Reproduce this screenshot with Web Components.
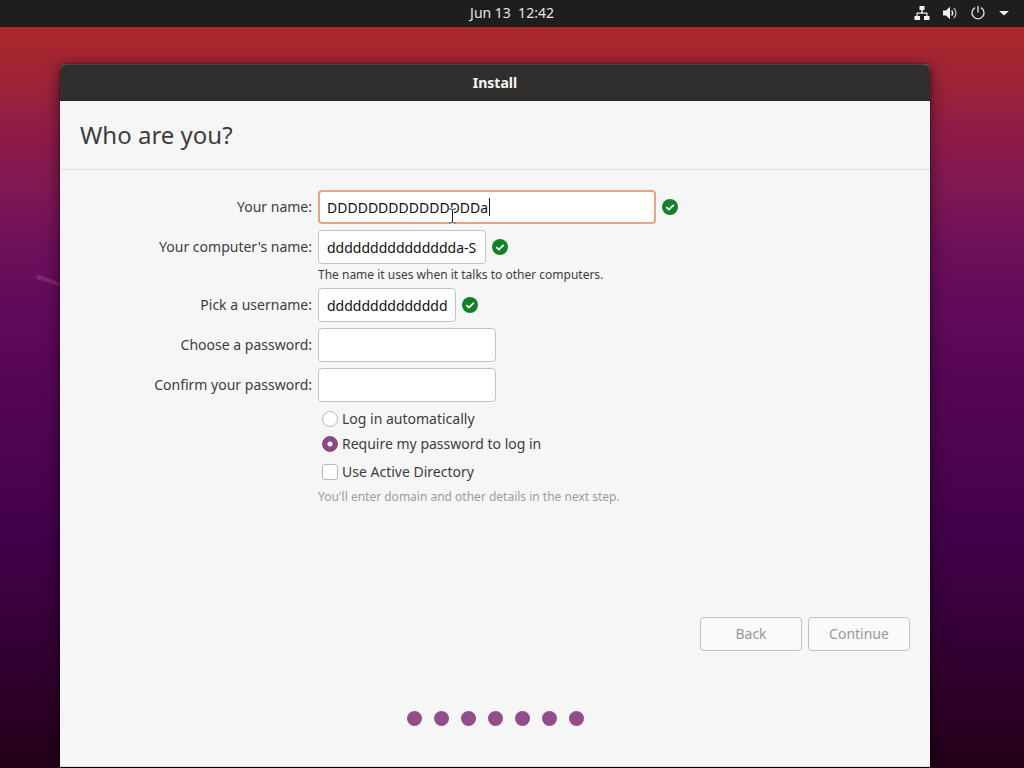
<!DOCTYPE html>
<html lang="en">
<head>
<meta charset="utf-8">
<title>Install</title>
<style>
    html, body {
        margin: 0;
    }
    body {
        font-family: "Noto Sans", "Open Sans", sans-serif;
        font-size: 14px;
        line-height: 20px;
        color: #3d3d3d;
    }
</style>
</head>
<body>
<desktop-screen>
    <top-bar slot="bar">Jun 13&nbsp; 12:42</top-bar>
    <app-window heading="Install">
        <installer-page heading="Who are you?">
            <form-field label="Your name:" value="DDDDDDDDDDDDDDDa" size="large" valid active></form-field>
            <form-field label="Your computer's name:" value="ddddddddddddddda-Standard-PC" size="medium" valid>The name it uses when it talks to other computers.</form-field>
            <form-field label="Pick a username:" value="ddddddddddddddda" size="small" valid></form-field>
            <form-field label="Choose a password:" type="password" size="secret"></form-field>
            <form-field label="Confirm your password:" type="password" size="secret"></form-field>
            <login-options>You'll enter domain and other details in the next step.</login-options>
            <nav-button slot="actions">Back</nav-button>
            <nav-button slot="actions">Continue</nav-button>
            <progress-dots slot="progress" count="7"></progress-dots>
        </installer-page>
    </app-window>
</desktop-screen>

<script>
class DesktopScreen extends HTMLElement {
    constructor() {
        super();
        this.attachShadow({ mode: 'open' });
        this.shadowRoot.innerHTML = `
            <style>
                :host {
                    display: flex;
                    flex-direction: column;
                    position: relative;
                    min-height: 100vh;
                    box-sizing: border-box;
                    overflow: hidden;
                    background: linear-gradient(#ad292a 3%, #9d2338 11%, #8d1b48 18%, #7f1853 25%, #6e105a 32%, #630b5b 39%, #570657 49%, #4e0551 58%, #400147 72%, #32002f 87%, #230018 100%);
                }
                .work-area {
                    flex: 1;
                    display: flex;
                    padding: 37px 94px 1px 60px;
                }
                /* faint facet line of the wallpaper */
                .streak {
                    position: absolute;
                    left: 36px;
                    top: 274px;
                }
                ::slotted(app-window) {
                    flex: 1;
                }
            </style>
            <slot name="bar"></slot>
            <svg class="streak" width="30" height="14" aria-hidden="true"><path d="M0 1 L4 1 L30 11 L30 14 L1 5Z" fill="#a44b84" opacity=".4"/></svg>
            <main class="work-area"><slot></slot></main>
        `;
    }
}

class TopBar extends HTMLElement {
    constructor() {
        super();
        this.attachShadow({ mode: 'open' });
        this.shadowRoot.innerHTML = `
            <style>
                :host {
                    display: grid;
                    grid-template-columns: 1fr auto 1fr;
                    align-items: center;
                    height: 26px;
                    padding: 0 14px;
                    border-bottom: 1px solid #1e1e1e;
                    background: #1e1e1e;
                    color: #e6e6e6;
                }
                .clock {
                    grid-column: 2;
                }
                .status {
                    display: flex;
                    justify-content: flex-end;
                    align-items: center;
                    gap: 12px;
                }
                svg {
                    display: block;
                }
            </style>
            <span class="clock"><slot></slot></span>
            <div class="status">
                <svg width="16" height="16" viewBox="0 0 16 16" fill="#f2f2f2" role="img" aria-label="Network">
                    <path d="M5.5 1h5v4H8.7v2.5h4.8V11H15.5v4h-5.5v-4h2.3V8.7H3.7V11H6v4H.5v-4h2V7.5h4.8V5H5.5z"/>
                </svg>
                <svg width="16" height="16" viewBox="0 0 16 16" role="img" aria-label="Volume">
                    <path d="M1 5.5h3L8 1.8v12.4L4 10.5H1z" fill="#f2f2f2"/>
                    <path d="M9.7 5.5q2 2.5 0 5" stroke="#f2f2f2" stroke-width="1.4" fill="none"/>
                    <path d="M11.8 2.8q4.4 5.2 0 10.4" stroke="#bdbdbd" stroke-width="1.3" fill="none"/>
                </svg>
                <svg width="16" height="16" viewBox="0 0 16 16" fill="none" stroke="#e6e6e6" stroke-width="1.3" role="img" aria-label="Power">
                    <path d="M5 2.6a6 6 0 1 0 6 0M8 1v6.5"/>
                </svg>
                <svg width="12" height="16" viewBox="0 0 12 16" fill="#f2f2f2" aria-hidden="true">
                    <path d="M1 6h10l-5 4.6z"/>
                </svg>
            </div>
        `;
    }
}

class AppWindow extends HTMLElement {
    constructor() {
        super();
        this.attachShadow({ mode: 'open' });
        this.shadowRoot.innerHTML = `
            <style>
                :host {
                    display: flex;
                    flex-direction: column;
                    position: relative;
                    border-radius: 6px 6px 0 0;
                    box-shadow: 0 3px 16px rgba(0, 0, 0, 0.55), 0 0 2px rgba(0, 0, 0, 0.6);
                    background: #f6f6f6;
                }
                header {
                    box-sizing: border-box;
                    height: 37px;
                    border-top: 1px solid #4a4541;
                    border-bottom: 1px solid #252321;
                    border-radius: 6px 6px 0 0;
                    background: #312f2e;
                    color: #f7f7f7;
                    font-size: 14px;
                    font-weight: 700;
                    line-height: 35px;
                    text-align: center;
                }
                ::slotted(*) {
                    flex: 1;
                }
            </style>
            <header>${this.getAttribute('heading')}</header>
            <slot></slot>
        `;
    }
}

class InstallerPage extends HTMLElement {
    constructor() {
        super();
        this.attachShadow({ mode: 'open' });
        this.shadowRoot.innerHTML = `
            <style>
                :host {
                    display: flex;
                    flex-direction: column;
                    border-bottom: 1px solid #dcdcdc;
                }
                h1 {
                    margin: 0;
                    padding: 0 20px;
                    border-bottom: 1px solid #dedede;
                    font-size: 24px;
                    font-weight: 400;
                    line-height: 68px;
                }
                .fields {
                    flex: 1;
                    display: flex;
                    flex-direction: column;
                    gap: 6px;
                    padding: 20px;
                }
                .actions {
                    display: flex;
                    justify-content: flex-end;
                    gap: 6px;
                    padding: 0 20px;
                }
                .progress {
                    padding: 60px 20px 40px;
                }
            </style>
            <h1>${this.getAttribute('heading')}</h1>
            <div class="fields"><slot></slot></div>
            <div class="actions"><slot name="actions"></slot></div>
            <div class="progress"><slot name="progress"></slot></div>
        `;
    }
}

class FormField extends HTMLElement {
    constructor() {
        super();
        this.attachShadow({ mode: 'open' });
        const type = this.getAttribute('type') || 'text';
        const hint = this.textContent.trim();

        this.shadowRoot.innerHTML = `
            <style>
                :host {
                    display: grid;
                    grid-template-columns: 232px 1fr;
                    column-gap: 6px;
                    align-items: center;
                }
                label {
                    text-align: right;
                    white-space: nowrap;
                }
                .control {
                    display: flex;
                    align-items: center;
                    gap: 6px;
                    position: relative;
                }
                input {
                    box-sizing: border-box;
                    height: 34px;
                    padding: 0 8px;
                    border: 1px solid #c4c1be;
                    border-radius: 4px;
                    background: #fff;
                    color: #111;
                    font: inherit;
                    outline: none;
                }
                .large { width: 338px; }
                .medium { width: 168px; }
                .small { width: 138px; }
                .secret { width: 178px; }
                .active {
                    border: 2px solid #e9a583;
                    padding: 0 7px;
                }
                .hint {
                    grid-column: 2;
                    margin-bottom: -4px;
                    font-size: 12px;
                    line-height: 22px;
                }
                .hint:empty {
                    display: none;
                }
                .caret {
                    position: absolute;
                    left: 171px;
                    top: 8px;
                    width: 1px;
                    height: 18px;
                    background: #111;
                }
                .pointer {
                    position: absolute;
                    left: 129px;
                    top: 17px;
                }
            </style>
            <label for="entry">${this.getAttribute('label')}</label>
            <div class="control">
                <input id="entry" type="${type}" class="${this.getAttribute('size')}" autocomplete="off" spellcheck="false">
            </div>
            <div class="hint">${hint}</div>
        `;

        const control = this.shadowRoot.querySelector('.control');
        const input = this.shadowRoot.querySelector('input');
        input.value = this.getAttribute('value') || '';

        if (this.hasAttribute('valid')) {
            control.insertAdjacentHTML('beforeend', `
                <svg width="16" height="16" viewBox="0 0 16 16" role="img" aria-label="Valid">
                    <circle cx="8" cy="8" r="8" fill="#12812a"/>
                    <path d="M4.3 8.1l2.6 2.5 4.9-4.8" fill="none" stroke="#fff" stroke-width="1.8"/>
                </svg>`);
        }
        if (this.hasAttribute('active')) {
            input.classList.add('active');
            control.insertAdjacentHTML('beforeend', `
                <span class="caret"></span>
                <svg class="pointer" width="11" height="18" viewBox="0 0 11 18" aria-hidden="true">
                    <path d="M2 2h2.5l1 1 1-1H9M5.5 3v12M2 16h2.5l1-1 1 1H9" fill="none" stroke="#fff" stroke-width="3"/>
                    <path d="M2 2h2.5l1 1 1-1H9M5.5 3v12M2 16h2.5l1-1 1 1H9" fill="none" stroke="#222" stroke-width="1"/>
                </svg>`);
        }
    }
}

class LoginOptions extends HTMLElement {
    constructor() {
        super();
        this.attachShadow({ mode: 'open' });
        this.shadowRoot.innerHTML = `
            <style>
                :host {
                    display: block;
                    margin-top: -2px;
                    padding-left: 238px;
                }
                label {
                    display: flex;
                    align-items: center;
                    gap: 4px;
                    height: 25px;
                    padding-left: 4px;
                }
                .directory {
                    margin-top: 3px;
                }
                input {
                    appearance: none;
                    box-sizing: border-box;
                    width: 16px;
                    height: 16px;
                    margin: 0;
                    border: 1px solid #bdb9b6;
                    background: #fff;
                }
                input[type="radio"] {
                    border-radius: 50%;
                }
                input[type="checkbox"] {
                    border-radius: 3px;
                }
                input[type="radio"]:checked {
                    border-color: #84477e;
                    background: radial-gradient(circle, #fff 2px, #8b4a85 3px);
                }
                p {
                    margin: 0;
                    color: #9c9c9c;
                    font-size: 12px;
                    line-height: 26px;
                }
            </style>
            <label><input type="radio" name="login">Log in automatically</label>
            <label><input type="radio" name="login" checked>Require my password to log in</label>
            <label class="directory"><input type="checkbox">Use Active Directory</label>
            <p><slot></slot></p>
        `;
    }
}

class NavButton extends HTMLElement {
    constructor() {
        super();
        this.attachShadow({ mode: 'open' });
        this.shadowRoot.innerHTML = `
            <style>
                :host {
                    display: block;
                }
                button {
                    width: 102px;
                    height: 34px;
                    border: 1px solid #c4c1be;
                    border-radius: 4px;
                    background: #fafafa;
                    color: #989898;
                    font: inherit;
                }
            </style>
            <button type="button" disabled><slot></slot></button>
        `;
    }
}

class ProgressDots extends HTMLElement {
    constructor() {
        super();
        this.attachShadow({ mode: 'open' });
        this.shadowRoot.innerHTML = `
            <style>
                :host {
                    display: flex;
                    justify-content: center;
                    gap: 12px;
                }
                span {
                    width: 15px;
                    height: 15px;
                    border-radius: 50%;
                    background: #924d8b;
                }
            </style>
            ${'<span></span>'.repeat(Number(this.getAttribute('count')))}
        `;
    }
}

customElements.define('desktop-screen', DesktopScreen);
customElements.define('top-bar', TopBar);
customElements.define('app-window', AppWindow);
customElements.define('installer-page', InstallerPage);
customElements.define('form-field', FormField);
customElements.define('login-options', LoginOptions);
customElements.define('nav-button', NavButton);
customElements.define('progress-dots', ProgressDots);
</script>
</body>
</html>
